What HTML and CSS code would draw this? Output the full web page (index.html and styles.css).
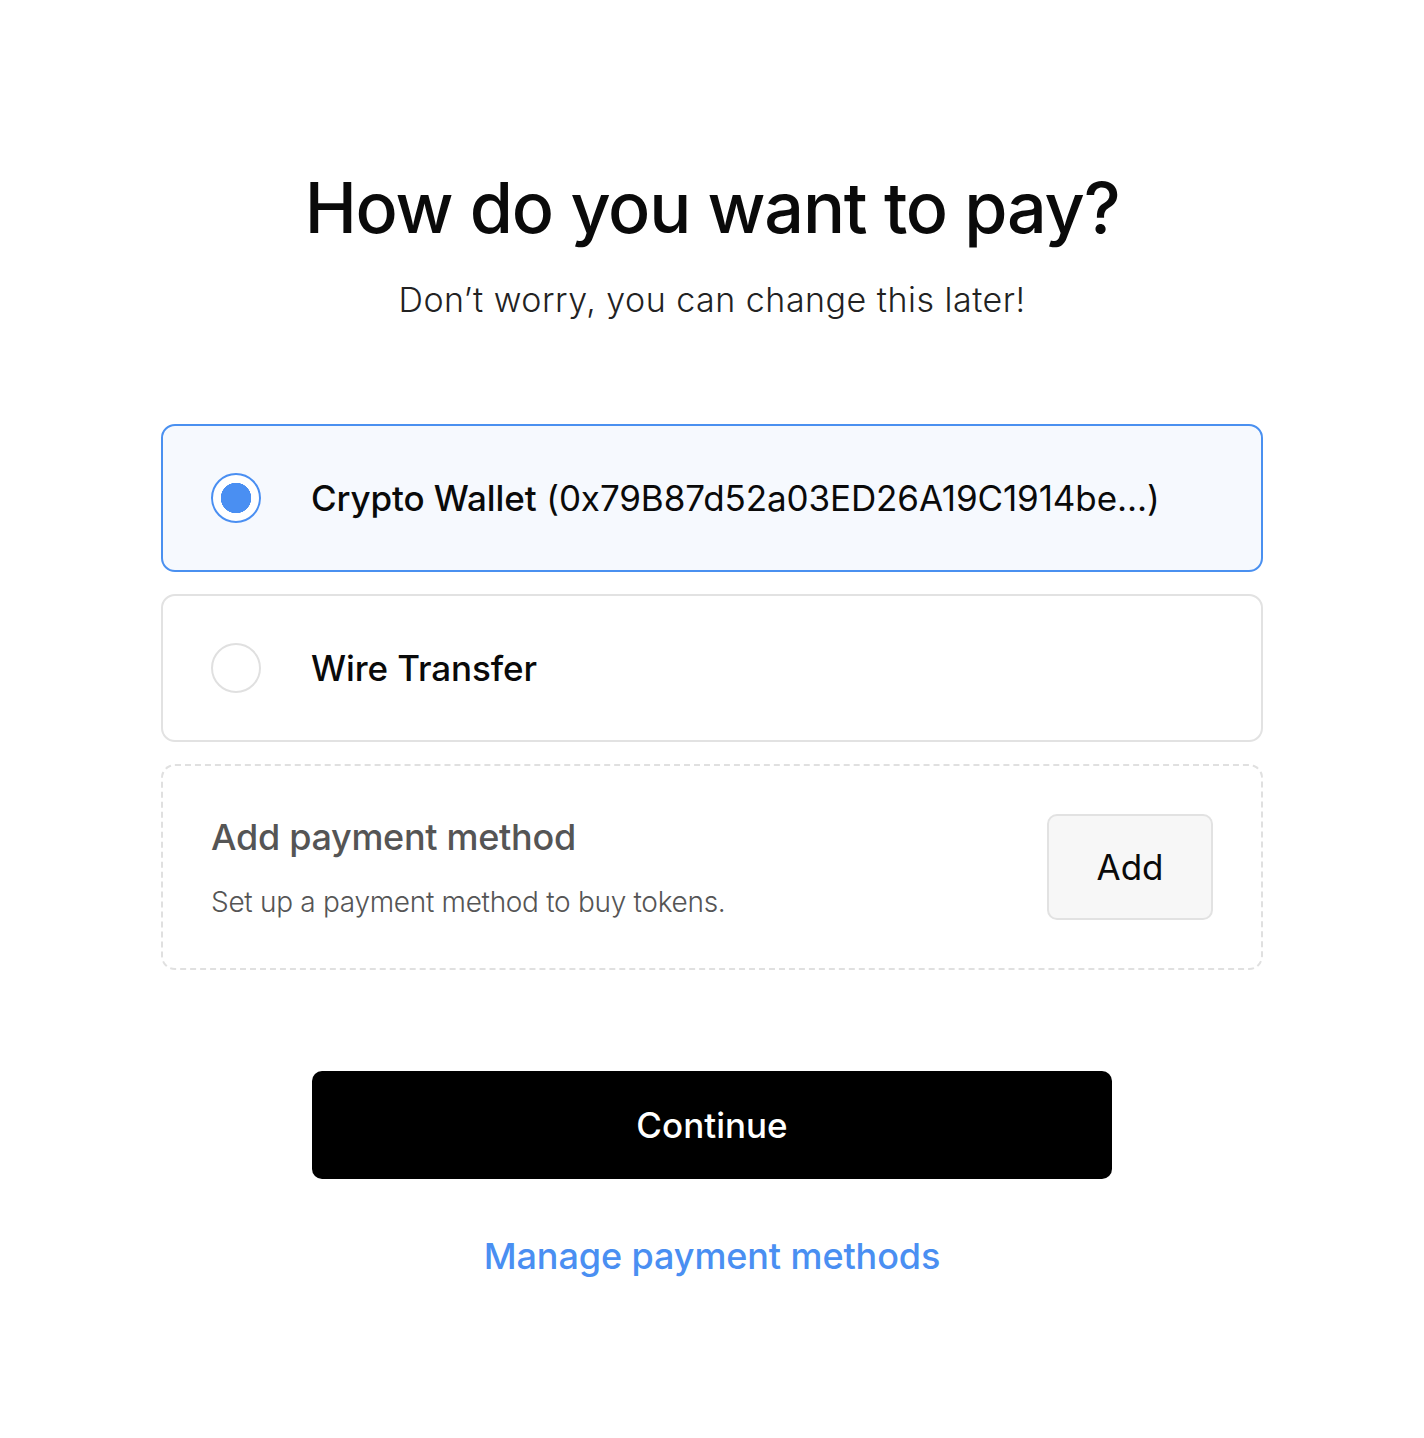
FILE: index.html
```html
<!DOCTYPE html>
<html lang="en">
<head>
  <meta charset="UTF-8">
  <meta name="viewport" content="width=device-width, initial-scale=1.0">
  <title>How do you want to pay?</title>
  <link rel="stylesheet" href="styles.css">
</head>
<body>
  <main class="page">
    <h1 class="title">How do you want to pay?</h1>
    <p class="subtitle">Don’t worry, you can change this later!</p>

    <!-- payment options -->
    <div class="options">
      <label class="option selected">
        <span class="radio"></span>
        <span class="option-label"><strong>Crypto Wallet</strong> (0x79B87d52a03ED26A19C1914be...)</span>
      </label>
      <label class="option">
        <span class="radio"></span>
        <span class="option-label"><strong>Wire Transfer</strong></span>
      </label>
      <div class="add-method">
        <div class="add-text">
          <h2>Add payment method</h2>
          <p>Set up a payment method to buy tokens.</p>
        </div>
        <button class="add-btn">Add</button>
      </div>
    </div>

    <button class="continue">Continue</button>
    <a class="manage" href="#">Manage payment methods</a>
  </main>
</body>
</html>
```

FILE: styles.css
```css
body { margin: 0; font-family: Inter, "Noto Sans", sans-serif; color: #0a0a0a; background: #fff; }
.page { display: flex; flex-direction: column; align-items: center; padding-top: 166px; }
.title { margin: 0; font-size: 70px; font-weight: 500; line-height: 1.2; letter-spacing: -1.2px; }
.subtitle { margin: 28px 0 0; font-size: 34px; font-weight: 300; color: #222; line-height: 1.3; letter-spacing: 0.5px; }

.options { width: 1102px; margin-top: 102px; display: flex; flex-direction: column; gap: 22px; }
.option { box-sizing: border-box; height: 148px; display: flex; align-items: center; gap: 50px; padding: 0 48px; border: 2px solid #e2e2e2; border-radius: 14px; font-size: 35px; }
.option.selected { border-color: #4a90f0; background: #f6f9fe; }
.option strong { font-weight: 500; }
.option-label { letter-spacing: -0.1px; }
.radio { box-sizing: border-box; width: 50px; height: 50px; flex: none; border-radius: 50%; border: 2px solid #e0e0e0; background: #fff; }
.selected .radio { border-color: #4a8ff2; background: radial-gradient(circle, #4a8ff2 0 15px, #fff 15.5px); }

.add-method { box-sizing: border-box; height: 206px; display: flex; align-items: center; justify-content: space-between; padding: 0 48px; border: 2px dashed #e0e0e0; border-radius: 14px; }
.add-text h2 { margin: 0; font-size: 36px; font-weight: 500; color: #555; letter-spacing: -0.3px; }
.add-text p { margin: 26px 0 0; font-size: 28px; font-weight: 300; color: #555; letter-spacing: -0.3px; }
.add-btn { width: 166px; height: 106px; font-family: inherit; font-size: 35px; color: #0a0a0a; background: #f7f7f7; border: 2px solid #e2e2e2; border-radius: 10px; }

.continue { margin-top: 101px; width: 800px; height: 108px; border: none; border-radius: 10px; background: #000; color: #fff; font-family: inherit; font-size: 35px; font-weight: 500; }
.manage { margin-top: 55px; font-size: 36px; font-weight: 500; color: #4a8ff2; text-decoration: none; letter-spacing: -0.1px; }
```
